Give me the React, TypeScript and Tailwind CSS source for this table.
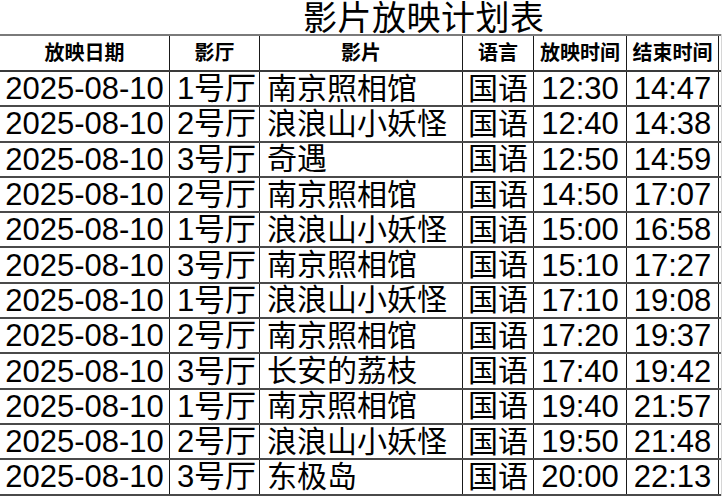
import React from "react";

type Show = {
  date: string;
  hall: string;
  film: string;
  lang: string;
  start: string;
  end: string;
};

const shows: Show[] = [
  { date: "2025-08-10", hall: "1号厅", film: "南京照相馆", lang: "国语", start: "12:30", end: "14:47" },
  { date: "2025-08-10", hall: "2号厅", film: "浪浪山小妖怪", lang: "国语", start: "12:40", end: "14:38" },
  { date: "2025-08-10", hall: "3号厅", film: "奇遇", lang: "国语", start: "12:50", end: "14:59" },
  { date: "2025-08-10", hall: "2号厅", film: "南京照相馆", lang: "国语", start: "14:50", end: "17:07" },
  { date: "2025-08-10", hall: "1号厅", film: "浪浪山小妖怪", lang: "国语", start: "15:00", end: "16:58" },
  { date: "2025-08-10", hall: "3号厅", film: "南京照相馆", lang: "国语", start: "15:10", end: "17:27" },
  { date: "2025-08-10", hall: "1号厅", film: "浪浪山小妖怪", lang: "国语", start: "17:10", end: "19:08" },
  { date: "2025-08-10", hall: "2号厅", film: "南京照相馆", lang: "国语", start: "17:20", end: "19:37" },
  { date: "2025-08-10", hall: "3号厅", film: "长安的荔枝", lang: "国语", start: "17:40", end: "19:42" },
  { date: "2025-08-10", hall: "1号厅", film: "南京照相馆", lang: "国语", start: "19:40", end: "21:57" },
  { date: "2025-08-10", hall: "2号厅", film: "浪浪山小妖怪", lang: "国语", start: "19:50", end: "21:48" },
  { date: "2025-08-10", hall: "3号厅", film: "东极岛", lang: "国语", start: "20:00", end: "22:13" },
];

const heads = ["放映日期", "影厅", "影片", "语言", "放映时间", "结束时间"];

// column widths add up to the right border at 719px
const cols = "grid grid-cols-[170px_90px_203px_71px_93px_92px]";
const cell = "flex items-center border-r border-[#1a1a1a] whitespace-nowrap leading-none";

export default function App() {
  return (
    <div
      className="h-[500px] w-[723px] overflow-hidden bg-white text-black"
      style={{ fontFamily: '"Liberation Sans", "Noto Sans CJK SC", sans-serif' }}
    >
      <div className="flex h-[34px] items-center pl-[303px] pt-[2px]">
        <span className="text-[34px] leading-none font-normal tracking-[0.5px]">影片放映计划表</span>
      </div>

      <div className="w-[722px] border-r border-[#d6d6d6]">
        <div className={`${cols} h-[38px] border-y-2 border-t-[#7a7a7a] border-b-[#3a3a3a]`}>
          {heads.map((h) => (
            <div key={h} className={`${cell} justify-center text-[20px] font-bold`}>
              {h}
            </div>
          ))}
        </div>

        {shows.map((s, i) => (
          <div key={i} className={`${cols} h-[35.3px] border-b-2 border-[#4a4a4a]`}>
            <div className={`${cell} justify-center text-[31px]`}>{s.date}</div>
            <div className={`${cell} justify-center pl-1 text-[31px]`}>{s.hall}</div>
            <div className={`${cell} pl-[7px] text-[30px]`}>{s.film}</div>
            <div className={`${cell} justify-center text-[30px]`}>{s.lang}</div>
            <div className={`${cell} justify-center text-[31px]`}>{s.start}</div>
            <div className={`${cell} justify-center text-[31px]`}>{s.end}</div>
          </div>
        ))}
      </div>
    </div>
  );
}
